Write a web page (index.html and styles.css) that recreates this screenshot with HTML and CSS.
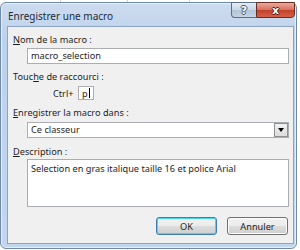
FILE: index.html
```html
<!DOCTYPE html>
<html lang="fr">
<head>
    <meta charset="UTF-8">
    <title>Enregistrer une macro</title>
    <link rel="stylesheet" href="styles.css">
</head>
<body>
    <div class="window">
        <!-- Title bar with help and close buttons -->
        <div class="titlebar">
            <span class="title">Enregistrer une macro</span>
            <button class="tb-button help">?</button>
            <button class="tb-button close">x</button>
        </div>

        <div class="client">
            <div class="label"><u>N</u>om de la macro :</div>
            <div class="field name-field">macro_selection</div>

            <div class="label label-gap">Touc<u>h</u>e de raccourci :</div>
            <div class="shortcut-row">
                <span class="ctrl">Ctrl+</span>
                <span class="key-box">p<span class="caret"></span></span>
            </div>

            <div class="label label-gap"><u>E</u>nregistrer la macro dans :</div>
            <div class="field select-field">
                <span class="select-value">Ce classeur</span>
                <span class="select-arrow"><span class="triangle"></span></span>
            </div>

            <div class="label desc-label"><u>D</u>escription :</div>
            <div class="field desc-field">Selection en gras italique taille 16 et police Arial</div>

            <div class="button-row">
                <button class="dlg-button default">OK</button>
                <button class="dlg-button">Annuler</button>
            </div>
        </div>
    </div>
</body>
</html>
```

FILE: styles.css
```css
/* Page behind the dialog: a bit of the Excel grid shows at the top */
body {
    margin: 0;
    width: 300px;
    height: 250px;
    overflow: hidden;
    background-color: #ffffff;
    background-image: linear-gradient(to right, transparent 60px, #d4d4d4 60px, #d4d4d4 61px, transparent 61px,
        transparent 127px, #d4d4d4 127px, #d4d4d4 128px, transparent 128px,
        transparent 189px, #d4d4d4 189px, #d4d4d4 190px, transparent 190px);
    font-family: "Noto Sans", "Open Sans", sans-serif;
    font-size: 9.2px;
    color: #1e1e1e;
}

/* Outer window frame */
.window {
    box-sizing: border-box;
    margin-top: 2px;
    width: 297px;
    height: 247px;
    padding: 0 1px 0 6px;
    border: 1px solid #6f89a8;
    border-radius: 6px;
    background: linear-gradient(to bottom, #cddcef, #bcd1eb 40px, #c3d6ee);
    box-shadow: inset 0 0 0 1px #e8f0fa;
}

.titlebar {
    display: flex;
    align-items: flex-start;
    height: 23px;
}

.title {
    flex: 1;
    padding-top: 6px;
    padding-left: 1px;
    font-size: 10px;
    color: #1e2a3a;
}

.tb-button {
    box-sizing: border-box;
    height: 16px;
    margin-top: -1px;
    padding: 0;
    border: 1px solid #5d6f87;
    font-family: "DejaVu Sans", sans-serif;
    font-weight: bold;
    line-height: 13px;
    color: #ffffff;
    cursor: pointer;
}

.help {
    width: 25px;
    border-right: none;
    border-radius: 0 0 0 4px;
    background: linear-gradient(to bottom, #e4ecf6, #c9d6e6 50%, #b5c5d9 51%, #c4d3e4);
    font-size: 11px;
    text-shadow: 1px 0 0 #45556d, -1px 0 0 #45556d, 0 1px 0 #45556d, 0 -1px 0 #45556d;
}

.close {
    width: 39px;
    border-color: #6b2a22;
    border-radius: 0 0 4px 0;
    background: linear-gradient(to bottom, #e9a99b, #d7705d 50%, #c3402b 51%, #d3614a);
    font-size: 11px;
    text-shadow: 1px 0 0 #5a1a12, -1px 0 0 #5a1a12, 0 1px 0 #5a1a12, 0 -1px 0 #5a1a12;
}

/* Inner dialog area */
.client {
    box-sizing: border-box;
    height: 218px;
    margin-right: 1px;
    padding: 6px 4px 0 5px;
    border: 1px solid #8da3be;
    background-color: #f0f0f0;
}

.label {
    height: 13px;
    line-height: 13px;
}

.label u {
    text-decoration-thickness: 1px;
    text-underline-offset: 1px;
}

.label-gap {
    margin-top: 6px;
}

.desc-label {
    margin-top: 7px;
}

.field {
    box-sizing: border-box;
    margin-left: 14px;
    border: 1px solid #abadb3;
    background-color: #ffffff;
    line-height: 14px;
}

.name-field {
    height: 16px;
    margin-top: 2px;
    padding-left: 3px;
}

.shortcut-row {
    display: flex;
    align-items: center;
    height: 14px;
    margin-top: 3px;
    padding-left: 40px;
}

.ctrl {
    width: 25px;
}

.key-box {
    box-sizing: border-box;
    display: flex;
    align-items: center;
    width: 16px;
    height: 14px;
    padding-left: 3px;
    border: 1px solid #abadb3;
    background-color: #ffffff;
}

.caret {
    width: 1px;
    height: 10px;
    margin-left: 1px;
    background-color: #000000;
}

.select-field {
    display: flex;
    height: 16px;
    margin-top: 3px;
}

.select-value {
    flex: 1;
    padding-left: 3px;
}

.select-arrow {
    box-sizing: border-box;
    display: flex;
    justify-content: center;
    align-items: center;
    width: 14px;
    border: 1px solid #8e8f8f;
    background: linear-gradient(to bottom, #f2f2f2, #dcdcdc);
}

.triangle {
    width: 0;
    height: 0;
    border-left: 3px solid transparent;
    border-right: 3px solid transparent;
    border-top: 4px solid #000000;
}

.desc-field {
    height: 48px;
    margin-top: 1px;
    padding: 2px 3px;
}

.button-row {
    display: flex;
    justify-content: flex-end;
    gap: 10px;
    margin-top: 10px;
    padding-right: 1px;
}

.dlg-button {
    width: 61px;
    height: 18px;
    padding: 0;
    border: 1px solid #707070;
    border-radius: 3px;
    background: linear-gradient(to bottom, #f2f2f2, #ebebeb 50%, #dddddd 51%, #cfcfcf);
    font-family: "Noto Sans", "Open Sans", sans-serif;
    font-size: 9.2px;
    color: #1e1e1e;
    box-shadow: inset 0 0 0 1px #fcfcfc;
    cursor: pointer;
}

.default {
    border-color: #3c7fb1;
    box-shadow: inset 0 0 0 1px #48d4f4;
}
```
